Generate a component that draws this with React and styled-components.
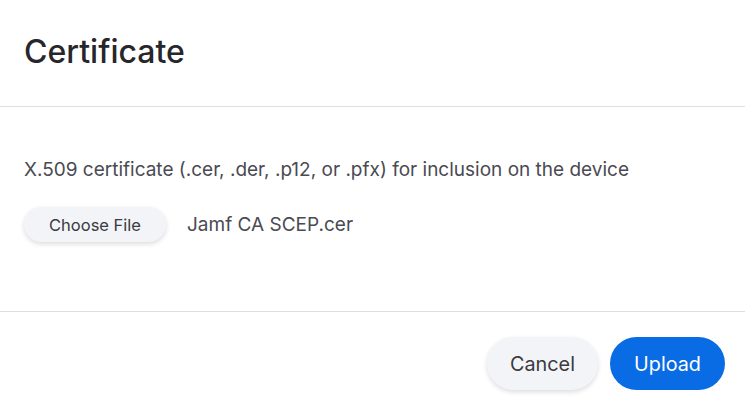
import React from 'react'
import styled, { createGlobalStyle } from 'styled-components'

const GlobalStyle = createGlobalStyle`
  html, body {
    margin: 0;
    padding: 0;
    background: #ffffff;
  }
  body {
    font-family: Inter, "Open Sans", sans-serif;
    color: #26262b;
  }
`

const Modal = styled.div`
  width: 745px;
  height: 412px;
  display: flex;
  flex-direction: column;
  background: #fff;
  overflow: hidden;
`

const Header = styled.div`
  height: 107px;
  display: flex;
  align-items: center;
  padding: 0 24px;
  border-bottom: 1px solid #dedee2;
  box-sizing: border-box;
  h2 {
    margin: 0;
    font-size: 32px;
    font-weight: 500;
    color: #26262b;
    padding-bottom: 4px;
  }
`

const Body = styled.div`
  height: 205px;
  box-sizing: border-box;
  padding: 51px 24px 0;
  border-bottom: 1px solid #dedee2;
  display: flex;
  flex-direction: column;
  gap: 25px;
`

const Description = styled.p`
  margin: 0;
  font-size: 19px;
  line-height: 24px;
  color: #4a4a52;
`

const FileRow = styled.div`
  display: flex;
  align-items: center;
  gap: 21px;
`

const Button = styled.button`
  border: none;
  border-radius: 999px;
  font-family: inherit;
  cursor: pointer;
  background: ${p => (p.$primary ? '#0a6ce4' : '#f3f4f7')};
  color: ${p => (p.$primary ? '#ffffff' : '#3a3a40')};
  box-shadow: ${p => (p.$primary ? 'none' : '0 2px 5px rgba(0, 0, 0, 0.14)')};
`

const ChooseButton = styled(Button)`
  width: 142px;
  height: 35px;
  font-size: 16.5px;
`

const FileName = styled.span`
  font-size: 19px;
  color: #4a4a52;
`

const Footer = styled.div`
  flex: 1;
  display: flex;
  justify-content: flex-end;
  align-items: flex-start;
  gap: 12px;
  padding: 25px 20px 0;
`

const ActionButton = styled(Button)`
  height: 53px;
  padding: 0 20px;
  min-width: ${p => (p.$primary ? '115px' : '111px')};
  font-size: 19.8px;
`

export default function App() {
  return (
    <>
      <GlobalStyle />
      <Modal>
        <Header>
          <h2>Certificate</h2>
        </Header>
        <Body>
          <Description>
            X.509 certificate (.cer, .der, .p12, or .pfx) for inclusion on the device
          </Description>
          <FileRow>
            <ChooseButton>Choose File</ChooseButton>
            <FileName>Jamf CA SCEP.cer</FileName>
          </FileRow>
        </Body>
        <Footer>
          <ActionButton>Cancel</ActionButton>
          <ActionButton $primary>Upload</ActionButton>
        </Footer>
      </Modal>
    </>
  )
}
